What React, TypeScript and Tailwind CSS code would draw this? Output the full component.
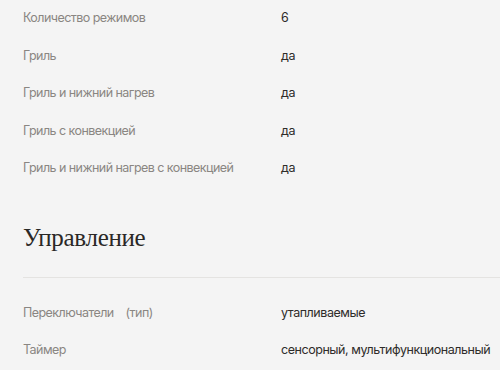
import React from 'react';

const rows1: [string, string][] = [
  ['Количество режимов', '6'],
  ['Гриль', 'да'],
  ['Гриль и нижний нагрев', 'да'],
  ['Гриль с конвекцией', 'да'],
  ['Гриль и нижний нагрев с конвекцией', 'да'],
];

const rows2: [string, string][] = [
  ['Переключатели\u00a0\u00a0\u00a0\u00a0(тип)', 'утапливаемые'],
  ['Таймер', 'сенсорный, мультифункциональный'],
];

const Row: React.FC<{ label: string; value: string }> = ({ label, value }) => (
  <div className="flex items-center h-[37.5px] text-[12.5px] whitespace-nowrap">
    <div className="w-[258px] shrink-0 text-[#8a8682] tracking-[-0.55px]">{label}</div>
    <div className="text-[#2e2c2a] tracking-[-0.45px]">{value}</div>
  </div>
);

const App: React.FC = () => {
  return (
    <div className="w-[500px] h-[370px] overflow-hidden bg-[#f4f4f4] pl-[23px] font-['Inter','Noto_Sans',sans-serif]">
      <div>
        {rows1.map(([l, v]) => <Row key={l} label={l} value={v} />)}
      </div>
      <h2 className="mt-[34px] text-[25px] leading-[32px] text-[#2a2826] font-['Liberation_Serif',serif] tracking-[-0.3px]">Управление</h2>
      <div className="mt-[23px] border-t border-[#e4e3e1]" />
      <div className="mt-[17px]">
        {rows2.map(([l, v]) => <Row key={l} label={l} value={v} />)}
      </div>
    </div>
  );
};

export default App;
